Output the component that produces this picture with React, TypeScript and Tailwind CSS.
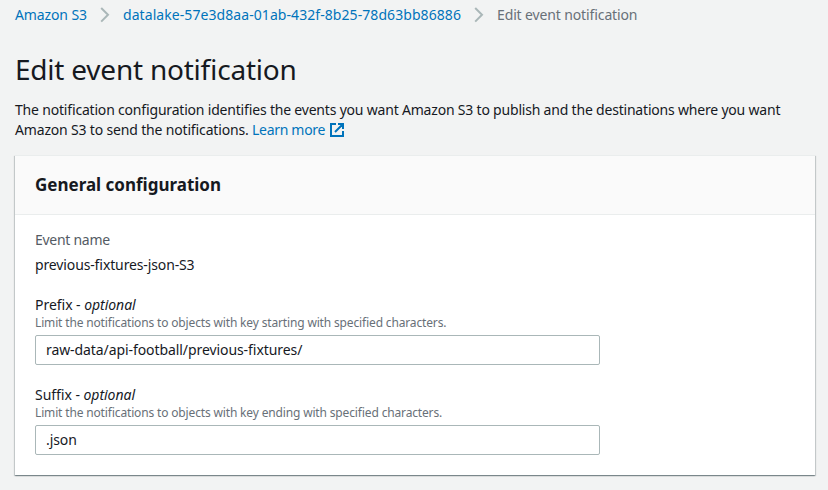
import type { ReactNode } from "react";

function Separator() {
  return (
    <svg className="mx-[13px] h-[16px] w-[10px] shrink-0" viewBox="0 0 10 16" fill="none" stroke="#aab7b8" strokeWidth="2">
      <path d="M1.2 1 8 7.8 1.2 14.6" />
    </svg>
  );
}

function ExternalIcon() {
  return (
    <svg className="ml-[5px] h-[14px] w-[14px] shrink-0" viewBox="0 0 14 14" fill="none" stroke="#0073bb" strokeWidth="2">
      <path d="M6 1H1v12h12V8M8 1h5v5M13 1 5 9" />
    </svg>
  );
}

function Field({ label, hint, value }: { label: string; hint: ReactNode; value: string }) {
  return (
    <div className="w-[565px]">
      <div className="h-5 leading-5 tracking-[-0.04px] whitespace-nowrap">
        <span>{label} - </span>
        <i>optional</i>
      </div>
      <div className="h-5 text-[12px] leading-4 tracking-[-0.155px] whitespace-nowrap text-[#687078]"><span>{hint}</span></div>
      <input
        className="block h-[30px] w-full rounded-[2px] border border-[#aab7b8] bg-white px-[10px] pb-[2px] tracking-[-0.08px] text-[#16191f] outline-none"
        defaultValue={value}
      />
    </div>
  );
}

export default function App() {
  return (
    <main className="h-[490px] w-[828px] overflow-hidden bg-[#f2f3f3] px-[15px] pt-[5px] font-['Noto_Sans',sans-serif] text-[14px] leading-5 text-[#16191f] [font-feature-settings:'liga']">
      <nav className="flex h-5 items-center whitespace-nowrap">
        <a className="w-[72px] tracking-[-0.12px] text-[#0073bb]">Amazon S3</a>
        <Separator />
        <a className="w-[338px] tracking-[0.07px] text-[#0073bb]">datalake-57e3d8aa-01ab-432f-8b25-78d63bb86886</a>
        <Separator />
        <span className="tracking-[-0.13px] text-[#687078]">Edit event notification</span>
      </nav>
      <h1 className="mt-[26px] h-9 text-[28px] leading-9 tracking-[-0.22px] whitespace-nowrap"><span>Edit event notification</span></h1>
      <div className="mt-[13px] whitespace-nowrap">
        <p className="tracking-[-0.198px]"><span>The notification configuration identifies the events you want Amazon S3 to publish and the destinations where you want</span></p>
        <p className="flex items-center">
          <span className="w-[233px] tracking-[-0.17px]">Amazon S3 to send the notifications.</span>
          <a className="ml-1 w-[73px] tracking-[-0.3px] text-[#0073bb]">Learn more</a>
          <ExternalIcon />
        </p>
      </div>
      <section className="mt-[15px] h-[320px] w-[800px] bg-white shadow-[0_1px_1px_0_rgba(0,28,36,0.3),1px_1px_1px_0_rgba(0,28,36,0.15),-1px_1px_1px_0_rgba(0,28,36,0.15)]">
        <header className="h-[60px] border-y border-[#eaeded] bg-[#fafafa] px-5 pt-[18px]">
          <h2 className="text-[17px] leading-[22px] font-bold"><span>General configuration</span></h2>
        </header>
        <div className="px-5 pt-[15px]">
          <div className="tracking-[-0.28px] text-[#545b64]"><span>Event name</span></div>
          <div className="mt-[5px] mb-5 tracking-[-0.13px]"><span>previous-fixtures-json-S3</span></div>
          <Field label="Prefix" hint="Limit the notifications to objects with key starting with specified characters." value="raw-data/api-football/previous-fixtures/" />
          <div className="h-5" />
          <Field label="Suffix" hint="Limit the notifications to objects with key ending with specified characters." value=".json" />
        </div>
      </section>
    </main>
  );
}
